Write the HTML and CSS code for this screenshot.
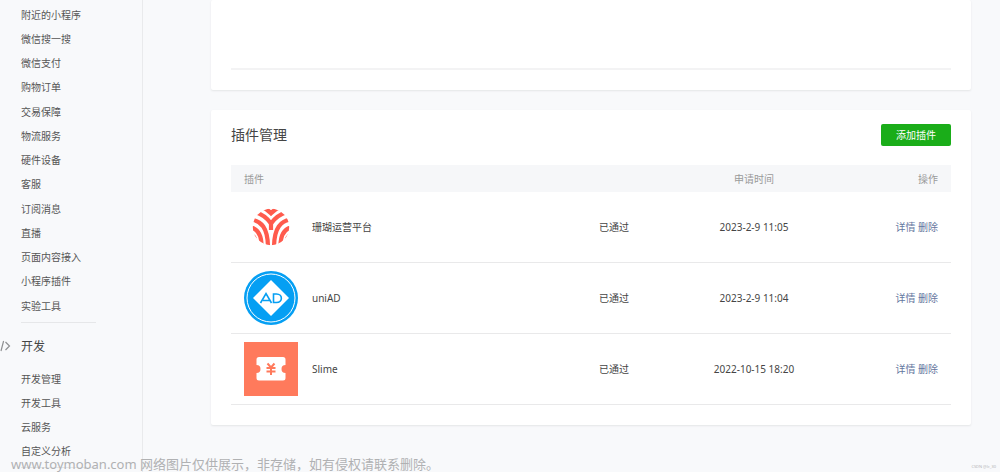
FILE: index.html
```html
<!DOCTYPE html>
<html lang="zh-CN">
<head>
<meta charset="utf-8">
<title>插件管理</title>
<link rel="stylesheet" href="styles.css">
</head>
<body>
<div class="layout">
  <nav class="sidebar">
    <ul class="menu">
      <li><a href="#">附近的小程序</a></li>
      <li><a href="#">微信搜一搜</a></li>
      <li><a href="#">微信支付</a></li>
      <li><a href="#">购物订单</a></li>
      <li><a href="#">交易保障</a></li>
      <li><a href="#">物流服务</a></li>
      <li><a href="#">硬件设备</a></li>
      <li><a href="#">客服</a></li>
      <li><a href="#">订阅消息</a></li>
      <li><a href="#">直播</a></li>
      <li><a href="#">页面内容接入</a></li>
      <li><a href="#">小程序插件</a></li>
      <li><a href="#">实验工具</a></li>
    </ul>
    <div class="divider"></div>
    <h2 class="group-title">
      <svg class="code-icon" viewBox="0 0 11 12" width="11" height="12" aria-hidden="true">
        <path d="M3.6 1L1 11M5.5 2L9.5 6L5.5 10" />
      </svg>
      开发
    </h2>
    <ul class="menu">
      <li><a href="#">开发管理</a></li>
      <li><a href="#">开发工具</a></li>
      <li><a href="#">云服务</a></li>
      <li><a href="#">自定义分析</a></li>
    </ul>
    <div class="divider"></div>
  </nav>

  <main class="content">
    <section class="card card-previous"><div class="rule"></div></section>

    <section class="card">
      <header class="card-header">
        <h1 class="card-title">插件管理</h1>
        <button class="add-button" type="button">添加插件</button>
      </header>
      <table class="plugins">
        <colgroup><col><col class="col-status"><col class="col-time"><col class="col-actions"></colgroup>
        <thead>
          <tr><th class="name-cell">插件</th><th></th><th>申请时间</th><th class="actions">操作</th></tr>
        </thead>
        <tbody>
          <tr>
            <td class="name-cell"><div class="plugin">
              <svg class="logo" viewBox="0 0 54 54" aria-hidden="true">
                <defs><clipPath id="coral"><circle cx="27" cy="27" r="18.2"/></clipPath></defs>
                <g clip-path="url(#coral)" fill="none" stroke="#ff5b4d" stroke-width="4.2">
                  <path d="M18 7Q23 9 27 13.200Q31 9 36 7"/>
                  <path d="M11 12Q21 15 27 23.500Q33 15 43 12"/>
                  <path d="M7 19.500C17 21 24 27 24 48M47 19.500C37 21 30 27 30 48"/>
                  <path d="M27 22V30"/>
                  <path d="M5 27C13 28 18 34 17.500 48M49 27C41 28 36 34 36.500 48"/>
                  <path d="M5 35C10 35 12.500 39 11 46M49 35C44 35 41.500 39 43 46"/>
                </g>
              </svg>
              <span>珊瑚运营平台</span>
            </div></td>
            <td>已通过</td>
            <td>2023-2-9 11:05</td>
            <td class="actions"><a href="#">详情</a> <a href="#">删除</a></td>
          </tr>
          <tr>
            <td class="name-cell"><div class="plugin">
              <svg class="logo" viewBox="0 0 54 54" aria-hidden="true">
                <circle cx="27" cy="27" r="27" fill="#059ff3"/>
                <circle cx="27" cy="27" r="24" fill="none" stroke="#fff" stroke-width="1"/>
                <path d="M27 9L45 27L27 45L9 27Z" fill="#fff"/>
                <path d="M16.500 32L22 22.500L27.500 32M19 29.500H25.500M29.500 23H32.500C39 23 39 31.500 32.500 31.500H29.500Z" fill="none" stroke="#059ff3" stroke-width="1.600"/>
              </svg>
              <span>uniAD</span>
            </div></td>
            <td>已通过</td>
            <td>2023-2-9 11:04</td>
            <td class="actions"><a href="#">详情</a> <a href="#">删除</a></td>
          </tr>
          <tr>
            <td class="name-cell"><div class="plugin">
              <svg class="logo" viewBox="0 0 54 54" aria-hidden="true">
                <rect width="54" height="54" fill="#ff7a5c"/>
                <path d="M15 15H39Q41.500 15 41.500 17.500V23A4 4 0 0 0 41.500 31V36Q41.500 38.500 39 38.500H15Q12.500 38.500 12.500 36V31A4 4 0 0 0 12.500 23V17.500Q12.500 15 15 15Z" fill="#fff"/>
                <path d="M23.500 21.500L27 25.500L30.500 21.500M27 25.500V33M22.500 26H31.500M22.500 29.500H31.500" fill="none" stroke="#ff7a5c" stroke-width="2"/>
              </svg>
              <span>Slime</span>
            </div></td>
            <td>已通过</td>
            <td>2022-10-15 18:20</td>
            <td class="actions"><a href="#">详情</a> <a href="#">删除</a></td>
          </tr>
        </tbody>
      </table>
    </section>
  </main>
</div>
<p class="watermark">www.toymoban.com 网络图片仅供展示，非存储，如有侵权请联系删除。</p>
<p class="credit">CSDN @lc_30</p>
</body>
</html>
```
FILE: styles.css
```css
* { box-sizing: border-box; }

body {
  margin: 0;
  background: #f8f9fb;
  color: #454545;
  font: 10px/16px "Noto Sans", "Noto Sans CJK SC", sans-serif;
  overflow: hidden;
}

a { text-decoration: none; }

.layout {
  display: flex;
  height: 100vh;
}

.sidebar {
  flex: 0 0 143px;
  padding: 3px 0 0 21px;
  border-right: 1px solid #e9eaec;
  overflow: hidden;
}

.menu {
  margin: 0;
  padding: 0;
  list-style: none;
}

.menu li { line-height: 24px; }
.menu li:nth-child(4n) { margin-bottom: 1px; }
.menu a { color: #555; }

.divider {
  width: 75px;
  height: 1px;
  margin-top: 4px;
  background: #e6e7e9;
}

.group-title {
  position: relative;
  margin: 14px 0 10px;
  font-size: 12px;
  font-weight: 400;
  line-height: 20px;
}

.code-icon {
  position: absolute;
  left: -21px;
  top: 3px;
  fill: none;
  stroke: #8f9092;
  stroke-width: 1.2;
}

.content {
  flex: 1;
  padding: 0 29px 0 68px;
}

.card {
  padding: 0 20px 20px;
  margin-bottom: 20px;
  background: #fff;
  border-radius: 2px;
  box-shadow: 0 1px 2px #e4e5e7;
}

.card-previous { padding-top: 68px; }

.rule {
  height: 2px;
  background: #f3f3f4;
}

.card-header {
  display: flex;
  align-items: center;
  justify-content: space-between;
  padding: 14px 0 19px;
}

.card-title {
  margin: 0;
  font-size: 14px;
  font-weight: 400;
  line-height: 22px;
}

.add-button {
  padding: 0 15px;
  border: 0;
  border-radius: 2px;
  background: #1aad19;
  color: #fff;
  font: inherit;
  line-height: 22px;
}

.plugins {
  width: 100%;
  table-layout: fixed;
  border-collapse: separate;
  border-spacing: 0;
}

.col-status, .col-time { width: 140px; }
.col-actions { width: 127px; }

.plugins th {
  padding: 0;
  height: 27px;
  background: #f6f7f9;
  color: #9a9a9a;
  font-weight: 400;
}

.plugins td {
  padding: 8px 0;
  border-bottom: 1px solid #e9e9ea;
  text-align: center;
}

.plugins .name-cell {
  padding-left: 13px;
  text-align: left;
}

.plugins .actions {
  padding-right: 13px;
  text-align: right;
}

.actions a { color: #6577a0; }

.plugin {
  display: flex;
  align-items: center;
  gap: 14px;
}

.logo {
  width: 54px;
  height: 54px;
}

.watermark {
  position: absolute;
  left: 11px;
  bottom: 0;
  margin: 0;
  color: #b0b1b3;
  font-size: 13px;
  line-height: 16px;
}

.credit {
  position: absolute;
  right: 4px;
  bottom: 1px;
  margin: 0;
  color: #b4b5b7;
  font-size: 4px;
  line-height: 8px;
}
```
